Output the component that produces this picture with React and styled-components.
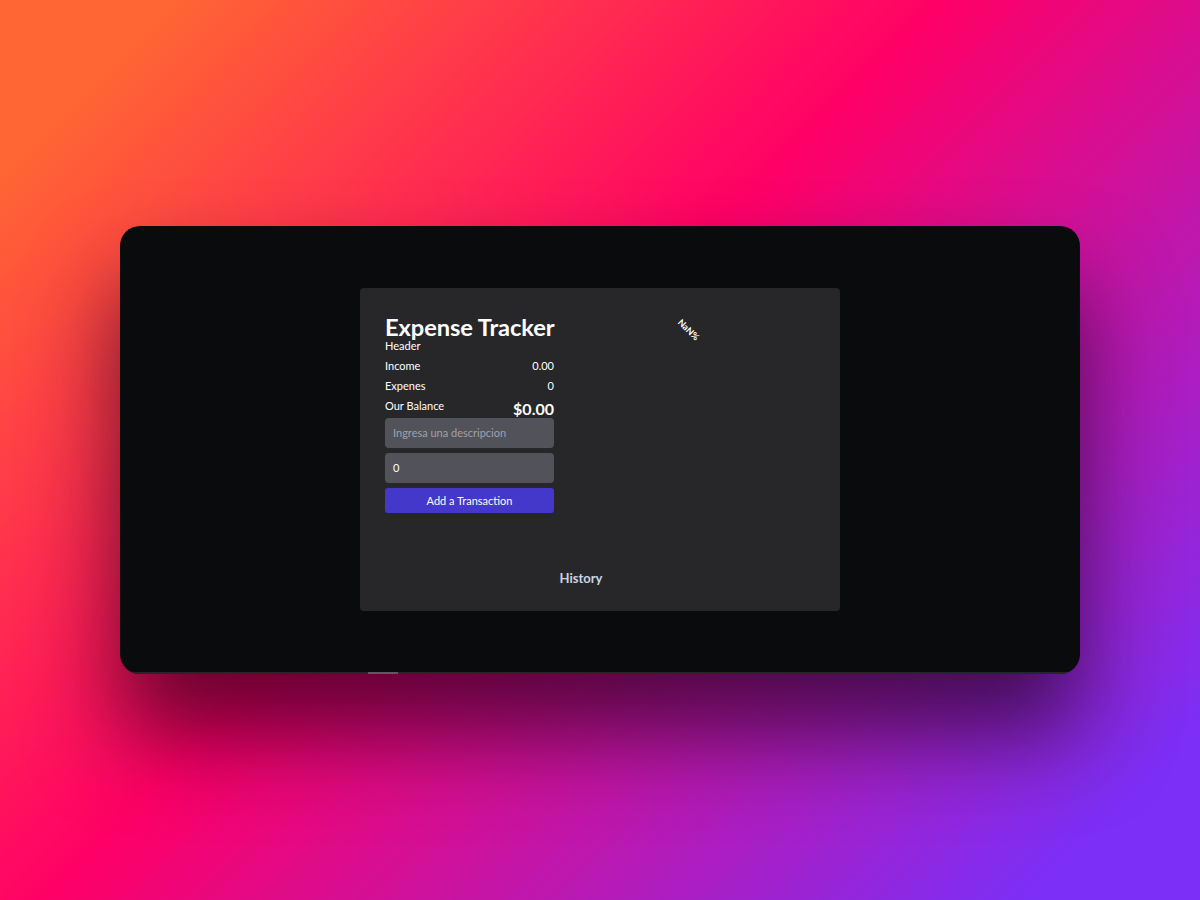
import React from "react";
import styled, { createGlobalStyle } from "styled-components";

const Global = createGlobalStyle`
  html, body { margin: 0; padding: 0; }
  body {
    width: 1200px; height: 900px; overflow: hidden;
    font-family: "Lato", "Noto Sans", sans-serif;
    background: linear-gradient(135deg, #ff6633 0%, #ff6633 8%, #ff0066 45%, #7b2ff7 92%);
  }
`;

const Stage = styled.div`
  width: 1200px; height: 900px;
  display: flex; align-items: center; justify-content: center;
`;

const Window = styled.div`
  width: 960px; height: 448px;
  background: #0a0b0d;
  border-radius: 20px;
  overflow: hidden;
  display: flex; flex-direction: column;
  box-shadow: 0 60px 90px rgba(20, 0, 20, 0.65);
`;

const Viewport = styled.div`
  flex: 1;
  display: flex; align-items: center; justify-content: center;
`;

const ScrollTrack = styled.div`
  height: 2px; background: #26262a; padding-left: 248px;
`;

const ScrollThumb = styled.div`
  width: 30px; height: 2px; background: #5a5a60;
`;

const Card = styled.div`
  width: 480px; height: 323px; box-sizing: border-box;
  background: #27272a; border-radius: 4px;
  padding: 26px 25px 0 25px;
  display: flex; flex-direction: column;
  color: #fff;
`;

const Top = styled.div`
  display: grid; grid-template-columns: 169px 1fr;
`;

const Left = styled.div`
  display: flex; flex-direction: column;
`;

const Title = styled.h1`
  margin: 0; font-size: 23.7px; font-weight: 700; line-height: 26px; color: #fff; white-space: nowrap;
  letter-spacing: -0.1px;
`;

const Sub = styled.div`
  font-size: 11px; line-height: 12px; margin-bottom: 4px;
`;

const Row = styled.div`
  display: flex; justify-content: space-between; align-items: center;
  font-size: 11px; height: 20px; line-height: 20px;
`;

const Big = styled.span`
  font-size: 16px; font-weight: 700; line-height: 20px; position: relative; top: 3px;
`;

const Input = styled.input`
  box-sizing: border-box; width: 100%; height: 30px; margin-top: ${p => p.$mt || 5}px;
  background: #52525b; border: none; border-radius: 4px; padding: 0 8px;
  color: #fff; font-family: inherit; font-size: 11px; outline: none;
  &::placeholder { color: #a1a1aa; }
`;

const Button = styled.button`
  height: 25px; margin-top: 5px; border: none; border-radius: 3px;
  background: #4338ca; color: #fff; font-family: inherit; font-size: 11px; cursor: pointer;
`;

const Right = styled.div`
  position: relative;
`;

const ChartLabel = styled.span`
  position: absolute; left: 122px; top: 10px;
  font-size: 9px; font-weight: 700; color: #fff; transform: rotate(45deg);
`;

const History = styled.h2`
  margin: 57px 38px 0 0; text-align: center; font-size: 13px; font-weight: 700; color: #cbd5e1;
`;

export default function App() {
  return (
    <>
      <Global />
      <Stage>
        <Window>
          <Viewport>
            <Card>
              <Top>
                <Left>
                  <Title>Expense Tracker</Title>
                  <Sub>Header</Sub>
                  <Row><span>Income</span><span>0.00</span></Row>
                  <Row><span>Expenes</span><span>0</span></Row>
                  <Row><span>Our Balance</span><Big>$0.00</Big></Row>
                  <Input $mt={2} placeholder="Ingresa una descripcion" />
                  <Input defaultValue="0" />
                  <Button>Add a Transaction</Button>
                </Left>
                <Right>
                  <ChartLabel>NaN%</ChartLabel>
                </Right>
              </Top>
              <History>History</History>
            </Card>
          </Viewport>
          <ScrollTrack><ScrollThumb /></ScrollTrack>
        </Window>
      </Stage>
    </>
  );
}
